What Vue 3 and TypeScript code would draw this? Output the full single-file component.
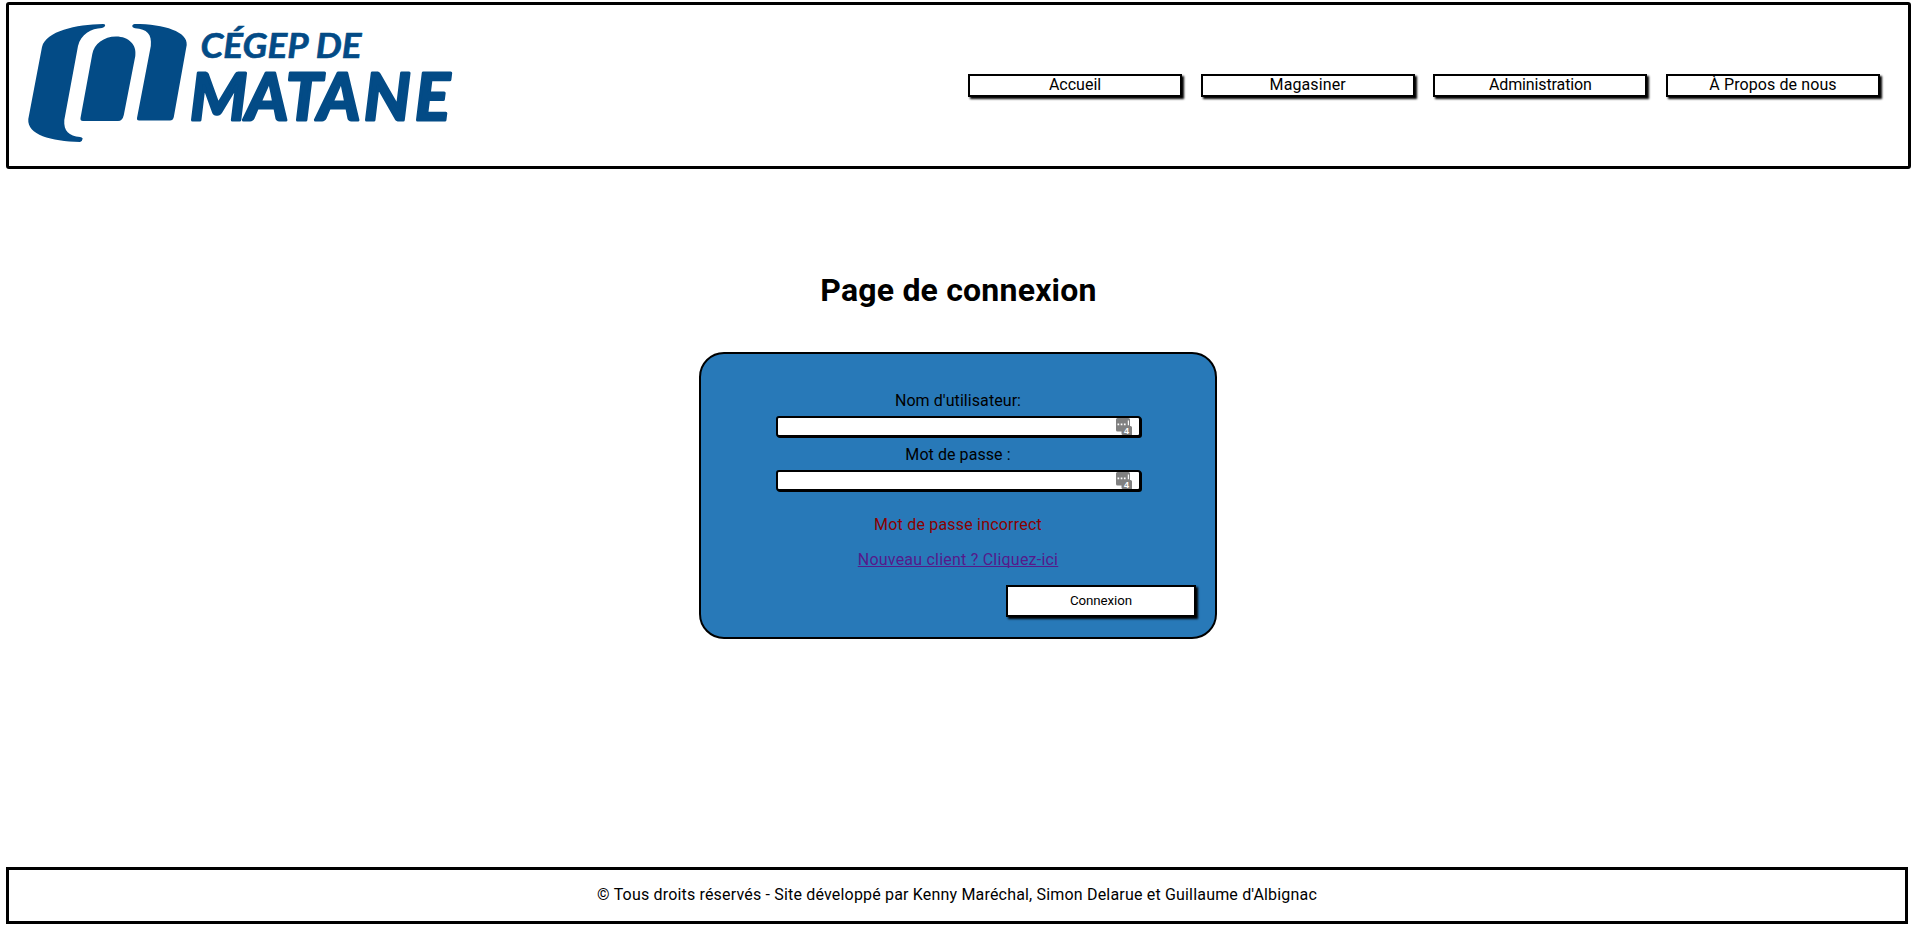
<script setup lang="ts">
import { ref } from 'vue'

interface NavLink {
  label: string
  key: string
}

const links: NavLink[] = [
  { label: 'Accueil', key: 'home' },
  { label: 'Magasiner', key: 'shop' },
  { label: 'Administration', key: 'admin' },
  { label: 'À Propos de nous', key: 'about' },
]

const fields = [
  { label: "Nom d'utilisateur:", id: 'username', type: 'text' },
  { label: 'Mot de passe :', id: 'password', type: 'password' },
]

const values = ref<Record<string, string>>({ username: '', password: '' })
</script>

<template>
  <div class="page">
    <header class="header">
      <svg class="logo" viewBox="20 15 450 135" width="450" height="135" role="img">
        <g fill="#034b86">
          <path d="M103 24C76 24.500 46 31 42 47L28.300 119C27 135 51 141 80 142Q82.500 141 82.700 138.500Q82 137 80 137C69 136 63.500 131 64.300 120L78 46C81 34 91 28.500 102 28Q105 27.500 105.200 25.300Q105 24 103 24Z" />
          <path d="M80.500 118L92.300 54C94 44 104 36.500 116 36.500C129 36.500 137 45 135.300 56L123.800 115Q122.500 121 118 121H83Q80 121 80.500 118Z" />
          <path d="M134.500 24C165 24 188 32 186.700 45L173.800 117Q173 120.500 170 120.500H139Q136.700 120.500 137 118L150.800 46C152 34 147 29 135 28.200Q132 27.500 132.300 25.500Q133 24 134.500 24Z" />
        </g>
        <text class="logo-small" x="200.500" y="58" textLength="161" lengthAdjust="spacingAndGlyphs">CÉGEP DE</text>
        <text class="logo-large" x="190 246 286 318 364 415" y="119.500">MATANE</text>
      </svg>
      <nav class="nav">
        <a v-for="link in links" :key="link.key" class="nav-link" :class="link.key">{{ link.label }}</a>
      </nav>
    </header>

    <main class="main">
      <h1 class="title">Page de connexion</h1>
      <form class="card" @submit.prevent>
        <div v-for="field in fields" :key="field.id" class="field">
          <label class="label" :for="field.id">{{ field.label }}</label>
          <div class="control">
            <input :id="field.id" v-model="values[field.id]" class="input" :type="field.type" />
            <svg class="manager" viewBox="0 0 16 17" width="16" height="17">
              <path d="M1.500 0H12.500Q14 0 14 1.500V8H14.500Q16 8 16 9.500V17H7Q5.500 17 5.500 15.500V13.500H1.500Q0 13.500 0 12V1.500Q0 0 1.500 0Z" fill="#808080" />
              <path d="M1.500 5.500H3.200V7.300H1.500ZM4.700 5.500H6.400V7.300H4.700ZM7.900 5.500H9.600V7.300H7.900ZM11.800 2.500H13V7.300H11.800Z" fill="#fff" />
              <text class="manager-count" x="8" y="16">4</text>
            </svg>
          </div>
        </div>
        <p class="error">Mot de passe incorrect</p>
        <a class="signup">Nouveau client ? Cliquez-ici</a>
        <button class="submit" type="submit">Connexion</button>
      </form>
    </main>

    <footer class="footer">
      <p class="credits">© Tous droits réservés - Site développé par Kenny Maréchal, Simon Delarue et Guillaume d'Albignac</p>
    </footer>
  </div>
</template>

<style>
body {
  margin: 0;
  background: #fff;
}
</style>

<style scoped>
.page {
  box-sizing: border-box;
  height: 925px;
  padding: 2px 4px 1px 6px;
  display: flex;
  flex-direction: column;
  overflow: hidden;
  font: 16px/19px Roboto, sans-serif;
  color: #000;
}
.header {
  box-sizing: border-box;
  height: 167px;
  border: 3px solid #000;
  border-radius: 3px;
  padding: 10px 28px 0 11px;
  display: flex;
  justify-content: space-between;
}
.logo {
  display: block;
}
.logo-small,
.logo-large {
  font-family: Lato, sans-serif;
  font-weight: 700;
  font-style: italic;
  fill: #034b86;
  stroke: #034b86;
  stroke-linejoin: round;
}
.logo-small {
  font-size: 34px;
  stroke-width: 0.6px;
}
.logo-large {
  font-size: 65px;
  stroke-width: 3px;
}
.nav {
  display: grid;
  grid-template-columns: repeat(4, 214px);
  column-gap: 18.67px;
  padding-top: 59px;
}
.nav-link {
  box-sizing: border-box;
  height: 23px;
  border: 2px solid #000;
  box-shadow: 2px 2px 2px #000;
  background: #fff;
  line-height: 17px;
  text-align: center;
}
.admin {
  letter-spacing: -0.12px;
}
.shop,
.about {
  letter-spacing: 0.1px;
}
.main {
  display: flex;
  flex-direction: column;
  align-items: center;
  width: 1904px;
}
.title {
  margin: 102px 0 43px;
  padding-left: 1px;
  font-size: 32px;
  line-height: 38px;
  font-weight: 700;
  letter-spacing: 0.2px;
}
.card {
  box-sizing: border-box;
  width: 518px;
  height: 287px;
  border: 2px solid #000;
  border-radius: 25px;
  background: #2879b8;
  padding: 37px 19px 0;
  display: flex;
  flex-direction: column;
  align-items: center;
}
.field {
  display: flex;
  flex-direction: column;
  align-items: center;
  margin-bottom: 8px;
}
.label {
  height: 19px;
  margin-bottom: 6px;
  letter-spacing: 0.07px;
}
.control {
  position: relative;
  width: 365px;
  height: 21px;
}
.input {
  box-sizing: border-box;
  display: block;
  width: 365px;
  height: 21px;
  margin: 0;
  padding: 0 28px 0 4px;
  border: 2px solid #000;
  border-radius: 3px;
  box-shadow: 1px 1px 0 #000;
  background: #fff;
  outline: none;
  font: 13.333px/17px Roboto, sans-serif;
}
.manager {
  position: absolute;
  top: 2px;
  right: 9px;
}
.manager-count {
  font: 700 9px "Liberation Sans", sans-serif;
  fill: #fff;
}
.error {
  margin: 16px 0;
  color: #8b0000;
  letter-spacing: 0.2px;
}
.signup {
  color: #551a8b;
  letter-spacing: 0.22px;
  text-decoration: underline;
  text-decoration-thickness: 1px;
  text-underline-offset: 1px;
  text-decoration-skip-ink: none;
}
.submit {
  box-sizing: border-box;
  align-self: flex-end;
  width: 190px;
  height: 32px;
  margin: 16px 0 0;
  padding: 0;
  border: 2px solid #000;
  box-shadow: 2px 2px 2px #000;
  background: #fff;
  color: #000;
  font: 13.333px/28px Roboto, sans-serif;
  letter-spacing: -0.1px;
}
.footer {
  box-sizing: border-box;
  width: 1902px;
  height: 57px;
  margin-top: auto;
  border: 3px solid #000;
  display: flex;
  justify-content: center;
  padding-top: 15px;
}
.credits {
  margin: 0;
  letter-spacing: 0.18px;
}
</style>
